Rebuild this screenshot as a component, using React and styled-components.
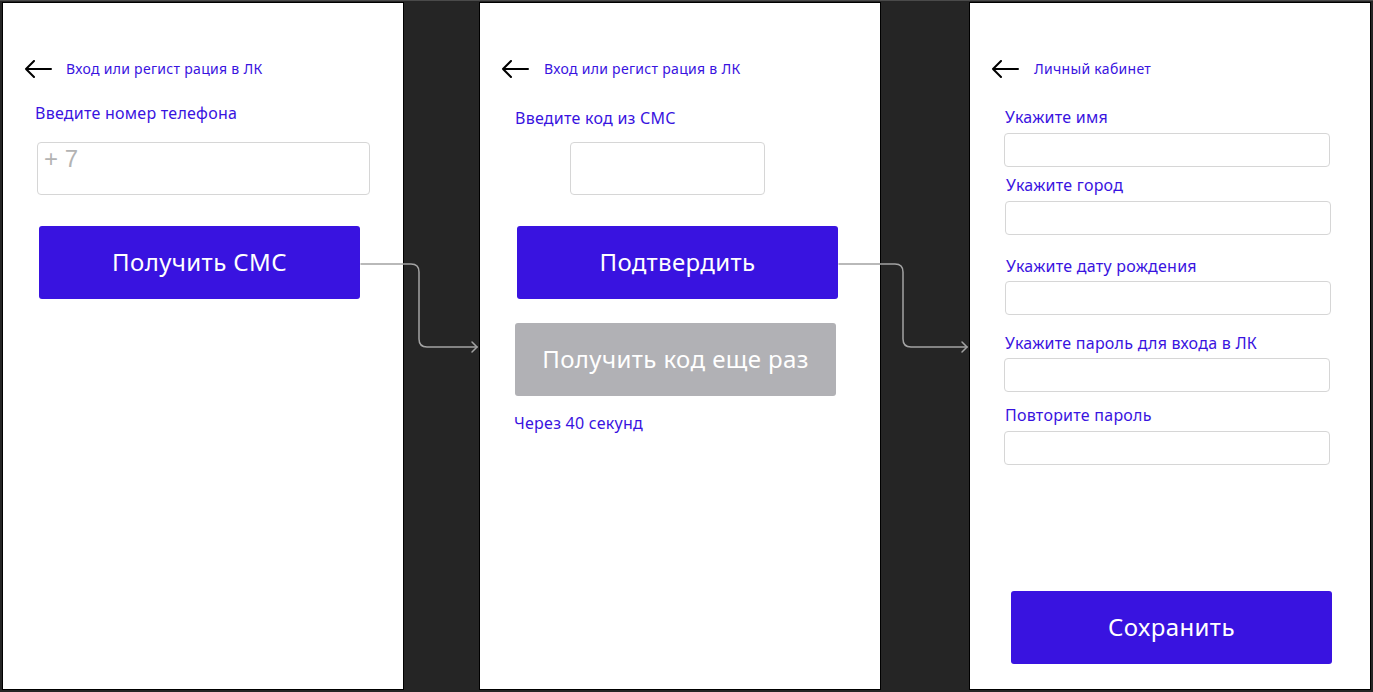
import React from "react"
import styled, { createGlobalStyle } from "styled-components"

const GlobalStyle = createGlobalStyle`
  html, body {
    margin: 0;
    padding: 0;
    background: #252525;
  }
  body {
    font-family: "Noto Sans", "Open Sans", sans-serif;
  }
`

const accent = "#3913e0"

function BackArrow() {
  return (
    <svg width="28" height="18" viewBox="0 0 28 18" fill="none">
      <path
        d="M27 9H2M10 1L2 9L10 17"
        stroke="#000"
        strokeWidth="2"
        strokeLinecap="round"
        strokeLinejoin="round"
      />
    </svg>
  )
}

function Header({ title, gap }) {
  return (
    <HeaderRow $gap={gap}>
      <BackArrow />
      <HeaderTitle>{title}</HeaderTitle>
    </HeaderRow>
  )
}

function Connectors() {
  return (
    <Overlay width="1373" height="692" viewBox="0 0 1373 692">
      <g stroke="#a3a3a3" strokeWidth="1.5" fill="none" strokeLinecap="round">
        <path d="M361 263H411Q419 263 419 271V338Q419 346 427 346H477" />
        <path d="M472 341L477 346L472 351" />
        <path d="M839 263H895Q903 263 903 271V338Q903 346 911 346H967" />
        <path d="M962 341L967 346L962 351" />
      </g>
    </Overlay>
  )
}

const profileFields = [
  { label: "Укажите имя", lx: 35, ly: 28, fx: 34, fy: 6 },
  { label: "Укажите город", lx: 36, ly: 8, fx: 35, fy: 6 },
  { label: "Укажите дату рождения", lx: 36, ly: 21, fx: 35, fy: 5 },
  { label: "Укажите пароль для входа в ЛК", lx: 35, ly: 18, fx: 34, fy: 5 },
  { label: "Повторите пароль", lx: 35, ly: 13, fx: 34, fy: 6 },
]

export default function App() {
  return (
    <>
      <GlobalStyle />
      <Canvas>
        <Screen $offset={2}>
          <Header title="Вход или регист рация в ЛК" gap={14} />
          <Label $x={32} $top={24}>Введите номер телефона</Label>
          <Field $x={34} $top={19} $w={333} $h={53}>
            <Placeholder>+ 7</Placeholder>
          </Field>
          <Button $x={36} $top={31}>Получить СМС</Button>
        </Screen>

        <Screen $offset={75}>
          <Header title="Вход или регист рация в ЛК" gap={15} />
          <Label $x={35} $top={29}>Введите код из СМС</Label>
          <Field $x={90} $top={14} $w={195} $h={53} />
          <Button $x={37} $top={31}>Подтвердить</Button>
          <Button $x={35} $top={24} $muted>Получить код еще раз</Button>
          <Label $x={34} $top={17}>Через 40 секунд</Label>
        </Screen>

        <Screen $offset={88}>
          <Header title="Личный кабинет" gap={15} />
          {profileFields.map((f) => (
            <React.Fragment key={f.label}>
              <Label $x={f.lx} $top={f.ly}>{f.label}</Label>
              <Field $x={f.fx} $top={f.fy} $w={326} $h={34} />
            </React.Fragment>
          ))}
          <Button $x={41} $top={126}>Сохранить</Button>
        </Screen>

        <Connectors />
      </Canvas>
    </>
  )
}

const Canvas = styled.div`
  position: relative;
  width: 1373px;
  height: 692px;
  overflow: hidden;
  box-sizing: border-box;
  padding-top: 2px;
  display: flex;
  align-items: flex-start;
  background: #252525;
  border-top: 1px solid #4a4a4a;
`

const Screen = styled.section`
  box-sizing: border-box;
  width: 402px;
  height: 688px;
  margin-left: ${(p) => p.$offset}px;
  margin-top: -1px;
  background: #fff;
  border: 1px solid #000;
  display: flex;
  flex-direction: column;
  align-items: flex-start;
  padding-top: 56px;
`

const HeaderRow = styled.div`
  display: flex;
  align-items: center;
  gap: ${(p) => p.$gap}px;
  height: 20px;
  padding-left: 21px;
`

const HeaderTitle = styled.span`
  font-size: 14px;
  line-height: 20px;
  letter-spacing: 0.3px;
  color: ${accent};
`

const Label = styled.div`
  margin-left: ${(p) => p.$x}px;
  margin-top: ${(p) => p.$top}px;
  font-size: 16px;
  line-height: 20px;
  letter-spacing: 0.25px;
  color: ${accent};
  white-space: nowrap;
`

const Field = styled.div`
  box-sizing: border-box;
  margin-left: ${(p) => p.$x}px;
  margin-top: ${(p) => p.$top}px;
  width: ${(p) => p.$w}px;
  height: ${(p) => p.$h}px;
  border: 1px solid #d6d6d6;
  border-radius: 4px;
  padding: 2px 0 0 6px;
`

const Placeholder = styled.span`
  font-family: "Liberation Sans", Arial, sans-serif;
  font-size: 24px;
  line-height: 28px;
  color: #b3b3b3;
`

const Button = styled.button`
  box-sizing: border-box;
  margin-left: ${(p) => p.$x}px;
  margin-top: ${(p) => p.$top}px;
  width: 321px;
  height: 73px;
  border: none;
  border-radius: 3px;
  background: ${(p) => (p.$muted ? "#b1b1b5" : accent)};
  color: #fff;
  font-family: "Noto Sans", "Open Sans", sans-serif;
  font-size: 24px;
  letter-spacing: 0.4px;
  display: flex;
  align-items: center;
  justify-content: center;
  padding: 0 0 2px;
  cursor: pointer;
`

const Overlay = styled.svg`
  position: absolute;
  left: 0;
  top: 0;
  pointer-events: none;
`
